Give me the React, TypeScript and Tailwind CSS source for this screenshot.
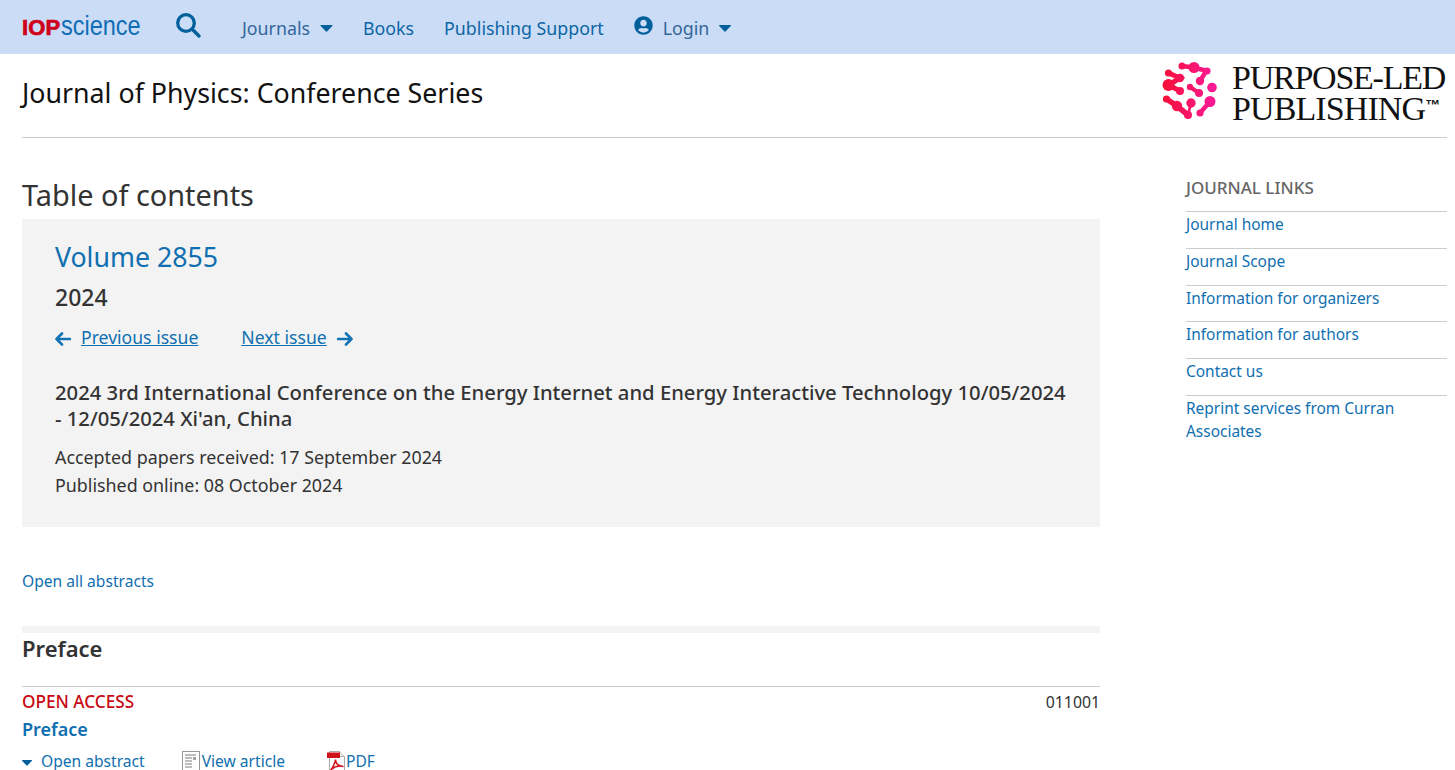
import React from 'react';
import { FaUserCircle } from 'react-icons/fa';

const journalLinks = [
  'Journal home',
  'Journal Scope',
  'Information for organizers',
  'Information for authors',
  'Contact us',
  'Reprint services from Curran Associates',
];

function Caret({ className }: { className: string }) {
  return (
    <svg viewBox="0 0 12 7" className={className} fill="currentColor">
      <path d="M0.6 0h10.8c.5 0 .8.6.4 1L6.500 6.400c-.3.3-.7.3-1 0L.2 1C-.2.6.1 0 .6 0z" />
    </svg>
  );
}

function MoleculeLogo() {
  return (
    <svg viewBox="0 0 70 68" className="w-[70px] h-[68px] shrink-0">
      <defs>
        <linearGradient id="mol" gradientUnits="userSpaceOnUse" x1="8" y1="0" x2="62" y2="0">
          <stop offset="0" stopColor="#f70f38" />
          <stop offset="1" stopColor="#fb1a9c" />
        </linearGradient>
      </defs>
      <g fill="url(#mol)">
        <circle cx="27" cy="8" r="3.500" />
        <circle cx="39" cy="9.500" r="5.500" />
        <circle cx="52" cy="13" r="3.600" />
        <circle cx="45" cy="23" r="4.200" />
        <circle cx="13.500" cy="15" r="3.600" />
        <circle cx="25" cy="20" r="4.200" />
        <circle cx="13.500" cy="27" r="6" />
        <circle cx="25" cy="33" r="4" />
        <circle cx="35" cy="29" r="3.200" />
        <circle cx="44" cy="35" r="4" />
        <circle cx="57" cy="29.500" r="4.800" />
        <circle cx="11.500" cy="41" r="3.600" />
        <circle cx="22" cy="48" r="5.200" />
        <circle cx="33" cy="57" r="4" />
        <circle cx="36" cy="45" r="4.700" />
        <circle cx="55" cy="43.500" r="5.500" />
        <circle cx="45" cy="55" r="3.600" />
      </g>
      <g stroke="url(#mol)" fill="none" strokeLinecap="round">
        <path d="M27 8L39 9.500L52 13" strokeWidth="4.500" />
        <path d="M50 15L45 23" strokeWidth="4.500" />
        <path d="M13.500 15L25 20L13.500 27L25 33" strokeWidth="5" />
        <path d="M35 29L44 35" strokeWidth="4" />
        <path d="M11.500 41L22 48L33 57" strokeWidth="5.500" />
        <path d="M36 45L33 57" strokeWidth="2.800" />
        <path d="M55 43.500L45 55" strokeWidth="4.500" />
      </g>
    </svg>
  );
}

function ArticleIcon() {
  return (
    <svg viewBox="0 0 19 20" className="w-[19px] h-[20px] shrink-0">
      <rect x="0.5" y="0.5" width="17" height="19" fill="#fff" stroke="#9a9a9a" />
      <path d="M3 4h11M3 7h7M3 10h7M3 13h7M3 16h7" stroke="#7d7d7d" strokeWidth="1.200" />
      <rect x="11" y="6" width="3" height="3" fill="#a5a5a5" />
    </svg>
  );
}

function PdfIcon() {
  return (
    <svg viewBox="0 0 19 20" className="w-[19px] h-[20px] shrink-0">
      <path d="M2.500 .5H12.500L17.500 5.500V19.500H2.500z" fill="#fff" stroke="#aaa" />
      <path d="M12.500 .5V5.500H17.500" fill="#eee" stroke="#aaa" />
      <rect x="0" y="1.500" width="13" height="5.500" fill="#d0121a" />
      <path
        d="M3.500 19C5.500 17.500 8 12 8.500 8.500M8.500 8.500C8.500 12 11 15 16.500 15.500M16.500 15.500C12 14.500 7.500 15.500 3.500 19"
        fill="none"
        stroke="#d0121a"
        strokeWidth="1.500"
      />
    </svg>
  );
}

export default function App() {
  return (
    <div className="font-['Noto_Sans','Open_Sans',sans-serif] text-[#333] bg-white h-[770px] overflow-hidden">
      <header className="h-[54px] bg-[#cbddf6] flex items-center pl-[22px] pt-[2px] text-[17.8px] text-[#0d65a5]">
        <a className="flex items-baseline w-[118px] whitespace-nowrap font-['Liberation_Sans',sans-serif] -mt-[3px]">
          <span className="text-[#d0021b] font-black text-[22px] tracking-[0.2px] [-webkit-text-stroke:0.7px_#d0021b]">IOP</span>
          <span className="text-[#0f6db5] text-[27px] origin-left scale-x-[0.87] inline-block">science</span>
        </a>
        <svg viewBox="0 0 25 25" className="ml-[36px] w-[25px] h-[25px] -mt-[6px] text-[#00609c]" fill="none" stroke="currentColor" strokeWidth="3.300" strokeLinecap="round">
          <circle cx="10" cy="10" r="8.300" />
          <path d="M16.500 16.500L23 23" />
        </svg>
        <a className="ml-[41px] flex items-center text-[#33669a]">
          Journals
          <Caret className="ml-[10px] w-[13px] h-[7px] text-[#00609c]" />
        </a>
        <a className="ml-[30px]">Books</a>
        <a className="ml-[30px]">Publishing Support</a>
        <FaUserCircle className="ml-[30px] w-[19px] h-[19px] text-[#00609c] -mt-[5px]" />
        <a className="ml-[10px] flex items-center text-[#33669a]">
          Login
          <Caret className="ml-[10px] w-[12px] h-[7px] text-[#00609c]" />
        </a>
      </header>

      <div className="ml-[22px] mr-[8px] h-[84px] border-b border-[#ccc] flex justify-between">
        <h2 className="text-[26.75px] text-[#111] mt-[20px] leading-[38px]">Journal of Physics: Conference Series</h2>
        <div className="flex items-start pt-[4px] pr-[2px]">
          <MoleculeLogo />
          <div className="ml-[7px] mt-[4px] font-['Liberation_Serif',serif] text-[#111] text-[34px] leading-[31px] whitespace-nowrap">
            <div className="tracking-[-1.25px]">PURPOSE-LED</div>
            <div className="tracking-[-0.9px]">
              PUBLISHING<span className="align-top text-[15px] leading-[24px] font-['Liberation_Sans',sans-serif] font-bold tracking-normal">™</span>
            </div>
          </div>
        </div>
      </div>

      <div className="flex pl-[22px] pr-[8px]">
        <main className="w-[1078px]">
          <h2 className="mt-[38px] text-[28.9px] leading-[38px] text-[#333]">Table of contents</h2>
          <section className="mt-[5px] h-[308px] bg-[#f3f3f3] pl-[33px] pr-[20px]">
            <h2 className="pt-[19px] text-[26.7px] leading-[38px] text-[#0f6fb0]">Volume 2855</h2>
            <div className="mt-[6px] text-[23px] leading-[30px] font-medium text-[#333]">2024</div>
            <div className="mt-[11px] flex items-center text-[17.6px] leading-[28px] text-[#0f6fb0]">
              <svg viewBox="0 0 16 14" className="w-[16px] h-[14px] mt-[3px]" fill="none" stroke="#1273b5" strokeWidth="2.600" strokeLinecap="round" strokeLinejoin="round">
                <path d="M1.500 7H15M7 1.500L1.500 7L7 12.500" />
              </svg>
              <a className="ml-[10px] underline">Previous issue</a>
              <a className="ml-[43px] underline">Next issue</a>
              <svg viewBox="0 0 16 14" className="ml-[10px] w-[16px] h-[14px] mt-[3px]" fill="none" stroke="#1273b5" strokeWidth="2.600" strokeLinecap="round" strokeLinejoin="round">
                <path d="M1 7H14.500M9 1.500L14.500 7L9 12.500" />
              </svg>
            </div>
            <h4 className="mt-[28px] text-[20.24px] leading-[26px] font-medium text-[#333]">
              2024 3rd International Conference on the Energy Internet and Energy Interactive Technology 10/05/2024
              <br />- 12/05/2024 Xi'an, China
            </h4>
            <p className="mt-[12px] text-[17.85px] leading-[28px]">Accepted papers received: 17 September 2024</p>
            <p className="text-[17.85px] leading-[28px]">Published online: 08 October 2024</p>
          </section>

          <a className="block mt-[43px] text-[15.6px] leading-[23px] text-[#0f6fb0]">Open all abstracts</a>

          <div className="mt-[33px] h-[61px] border-t-[7px] border-[#f3f3f3] border-b border-b-[#ccc]">
            <h3 className="text-[22px] leading-[30px] font-semibold text-[#333]">Preface</h3>
          </div>
          <div className="mt-[3px] flex justify-between text-[17.2px] leading-[24px]">
            <span className="text-[#c80a14] font-medium">OPEN ACCESS</span>
            <span className="text-[#333] text-[15.8px]">011001</span>
          </div>
          <a className="block mt-[2px] text-[18px] leading-[26px] font-semibold text-[#0f6fb0]">Preface</a>
          <div className="mt-[8px] flex items-center text-[15.6px] leading-[22px] text-[#0f6fb0]">
            <Caret className="w-[10px] h-[6px] mt-[4px] text-[#00609c]" />
            <a className="ml-[9px]">Open abstract</a>
            <span className="ml-[37px]"><ArticleIcon /></span>
            <a className="ml-[1px]">View article</a>
            <span className="ml-[42px]"><PdfIcon /></span>
            <a>PDF</a>
          </div>
        </main>

        <aside className="ml-[86px] w-[261px] pt-[39px]">
          <h4 className="text-[17px] leading-[22px] font-medium text-[#666] pb-[12px] border-b border-[#ccc]">JOURNAL LINKS</h4>
          <ul className="text-[15.45px] leading-[23px] text-[#0f6fb0]">
            {journalLinks.map((link, i) => (
              <li key={link} className={i < journalLinks.length - 1 ? 'pt-[1px] pb-[11.8px] border-b border-[#ccc]' : 'pt-[1px]'}>
                {link}
              </li>
            ))}
          </ul>
        </aside>
      </div>
    </div>
  );
}
